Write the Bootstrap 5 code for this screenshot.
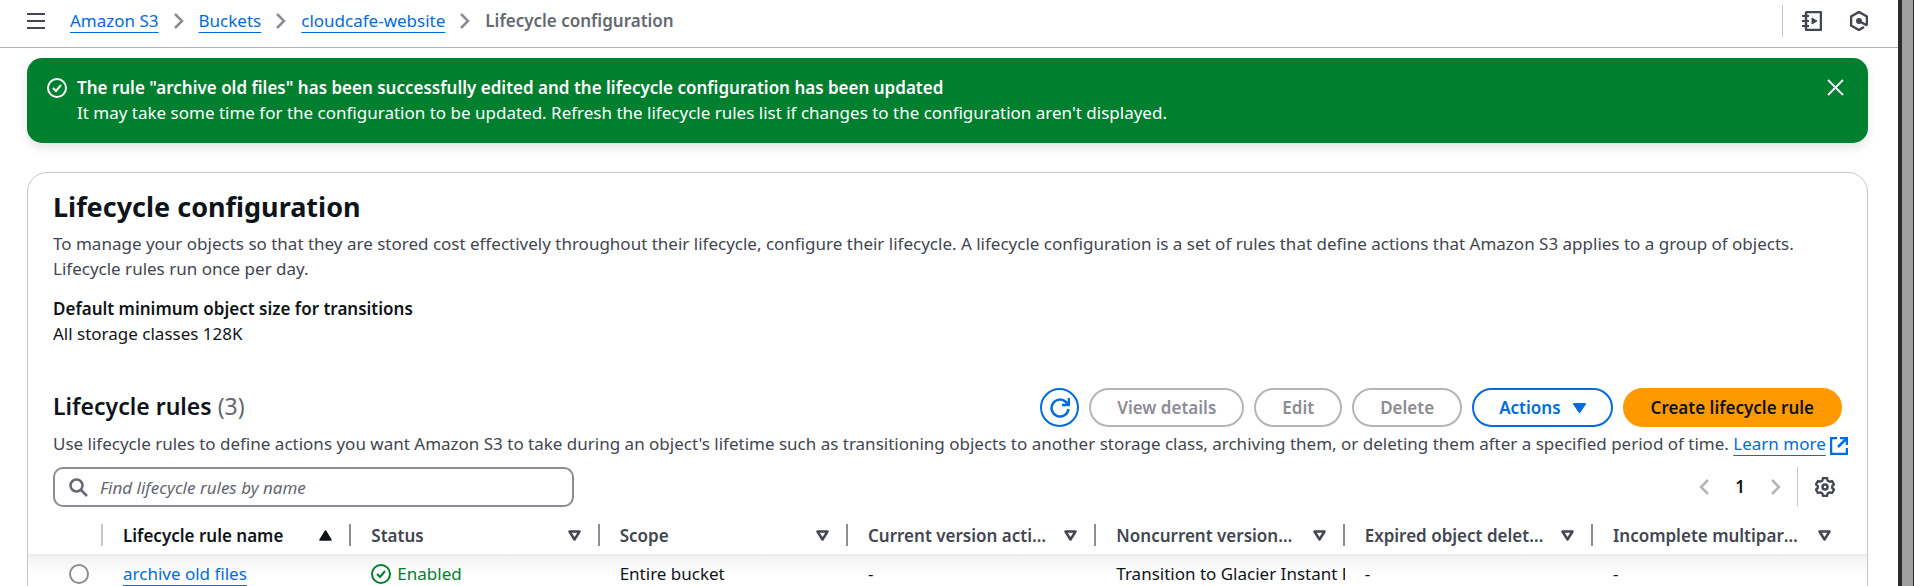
<!DOCTYPE html>
<html lang="en">
<head>
<meta charset="utf-8">
<meta name="viewport" content="width=device-width, initial-scale=1">
<title>Lifecycle configuration</title>
<link href="https://cdn.jsdelivr.net/npm/bootstrap@5.3.0/dist/css/bootstrap.min.css" rel="stylesheet">
<style>
  body { font: 400 17px/25px "Noto Sans", sans-serif; color: #0f141a; }
  a { color: #006ce0; text-decoration: underline; text-underline-offset: 5px; text-decoration-thickness: 1px; }
  svg { display: block; flex: none; fill: none; stroke: currentColor; stroke-width: 2; }
  svg.thick { stroke-width: 3; }
  .semi { font-weight: 600; }
  .ink-2 { color: #424650; }
  .ink-3 { color: #656871; }
  .icon-btn { background: none; border: 0; padding: 0; color: #424650; display: flex; }
  .topbar { height: 48px; padding: 0 30px 6px 27px; border-bottom: 1px solid #b4b4b4; }
  .topbar-tools { gap: 28px; padding-left: 19px; height: 32px; border-left: 1px solid #c6c6cd; }
  .crumbs { gap: 15px; margin-left: 25px; }
  .crumbs svg { color: #8c8c94; }
  .content { padding: 10px 30px 0 27px; }
  .flash { background: #00802f; color: #fff; border-radius: 15px; padding: 17px 24px 18px 20px; gap: 10px; box-shadow: 0 5px 10px rgba(0, 7, 22, .1); }
  .flash .icon-btn { color: #ebebf0; }
  .flash-icon { margin-top: 3px; }
  .panel { margin-top: 29px; border: 1px solid #c6c6cd; border-radius: 20px; min-height: 500px; }
  .panel-pad { padding: 15px 25px 0; }
  h1 { font-size: 27px; line-height: 37px; font-weight: 700; margin: 0 0 6px; }
  h2 { font-size: 23px; line-height: 30px; font-weight: 600; margin: 0; padding-bottom: 4px; }
  h2 span { font-weight: 400; color: #656871; }
  .intro { margin-bottom: 15px; }
  .rules-head { margin-top: 42px; }
  .rules-intro { margin: 4px -14px 11px 0; }
  .rules-intro a { white-space: nowrap; }
  .pill { height: 39px; border: 2px solid #006ce0; border-radius: 20px; padding: 0 26px; background: #fff; color: #006ce0; font-weight: 600; line-height: 25px; white-space: nowrap; }
  .pill:disabled { border-color: #b4b4bb; color: #8c8c94; }
  .pill-primary { background: #ff9900; border-color: #ff9900; color: #0f141a; }
  .pill-round { width: 39px; padding: 0; }
  .pill-menu { gap: 12px; padding: 0 25px; }
  .search { width: 521px; height: 40px; border: 2px solid #8c8c94; border-radius: 10px; padding: 0 14px; gap: 12px; color: #656871; }
  .search input { border: 0; outline: 0; background: none; padding: 0; color: #0f141a; }
  .search input::placeholder { font-style: italic; color: #656871; opacity: 1; }
  .pager { height: 39px; }
  .pager .dim { color: #b4b4bb; }
  .page-no { padding: 0 26px; font-weight: 600; }
  .prefs { height: 39px; border-left: 1px solid #c6c6cd; margin-left: 16px; padding: 0 7px 0 17px; }
  .rules { table-layout: fixed; width: 100%; margin-top: 9px; }
  .rules .pick { width: 75px; }
  .rules .final { width: 274px; }
  .rules th { height: 38px; padding: 8px 0 8px; vertical-align: top; font-weight: 600; color: #424650; }
  .rules thead { border-bottom: 2px solid #ebebf0; }
  .cell-head { height: 22px; padding: 0 17px 0 20px; gap: 14px; border-right: 2px solid #8c8c94; }
  .pick .cell-head { border-right-color: #c6c6cd; }
  .final .cell-head { border-right: 0; padding-right: 36px; }
  .rules .sorted { color: #0f141a; }
  .rules td { height: 48px; padding: 5px 0 0 20px; vertical-align: top; white-space: nowrap; overflow: hidden; }
  .rules tbody tr { background: linear-gradient(#f3f3f4, #fff 22px); }
  .rules td.choice { padding: 8px 0 0 41px; }
  .rules td.choice input { display: block; appearance: none; width: 20px; height: 20px; margin: 0; border: 2px solid #8c8c94; border-radius: 50%; background: #fff; }
  .ok { color: #00802f; gap: 6px; }
  .edge { width: 16px; flex: none; background: #9f9f9f; border-left: 4px solid #2b2b2b; border-right: 1px solid #2b2b2b; }
</style>
</head>
<body>
<div class="d-flex vh-100 overflow-hidden">
  <div class="flex-grow-1 overflow-hidden">
    <header class="topbar d-flex align-items-center">
      <button class="icon-btn" type="button" aria-label="Open navigation"><svg width="18" height="18" viewBox="0 0 18 18"><path d="M0 2h18M0 9h18M0 16h18"/></svg></button>
      <nav class="crumbs d-flex align-items-center me-auto" aria-label="Breadcrumb">
        <a href="#">Amazon S3</a>
        <svg width="10" height="16" viewBox="0 0 10 16"><path d="m1 1 7 7-7 7" stroke-width="2.5"/></svg>
        <a href="#">Buckets</a>
        <svg width="10" height="16" viewBox="0 0 10 16"><path d="m1 1 7 7-7 7" stroke-width="2.5"/></svg>
        <a href="#">cloudcafe-website</a>
        <svg width="10" height="16" viewBox="0 0 10 16"><path d="m1 1 7 7-7 7" stroke-width="2.5"/></svg>
        <span class="semi ink-3">Lifecycle configuration</span>
      </nav>
      <div class="topbar-tools d-flex align-items-center">
        <button class="icon-btn" type="button" aria-label="Tutorials"><svg width="20" height="20" viewBox="0 0 20 20"><rect x="4" y="1" width="15" height="18" rx="1" stroke-width="2.5"/><path d="M0 5h7M0 10h7M0 15h7"/><path d="m10 7 5 3-5 3z" fill="currentColor" stroke-width="1"/></svg></button>
        <button class="icon-btn" type="button" aria-label="Diagnostics"><svg width="18" height="20" viewBox="0 0 18 20"><path d="M17 14.500v-9L9 1 1 5.500v9L9 19l5-3M9 10l8 4.500" stroke-width="2.500"/><circle cx="9" cy="10" r="2" fill="currentColor"/></svg></button>
      </div>
    </header>

    <main class="content">
      <div class="flash d-flex align-items-start" role="status">
        <svg class="flash-icon" width="20" height="20" viewBox="0 0 20 20"><circle cx="10" cy="10" r="9"/><path d="m6 10 3 3 5-6"/></svg>
        <div class="flex-grow-1">
          <div class="semi">The rule "archive old files" has been successfully edited and the lifecycle configuration has been updated</div>
          <div>It may take some time for the configuration to be updated. Refresh the lifecycle rules list if changes to the configuration aren't displayed.</div>
        </div>
        <button class="icon-btn mt-1" type="button" aria-label="Dismiss"><svg width="17" height="17" viewBox="0 0 17 17"><path d="m1 1 15 15M16 1 1 16"/></svg></button>
      </div>

      <section class="panel">
        <div class="panel-pad">
          <h1>Lifecycle configuration</h1>
          <p class="ink-2 intro">To manage your objects so that they are stored cost effectively throughout their lifecycle, configure their lifecycle. A lifecycle configuration is a set of rules that define actions that Amazon S3 applies to a group of objects. Lifecycle rules run once per day.</p>
          <div class="semi">Default minimum object size for transitions</div>
          <div>All storage classes 128K</div>

          <div class="rules-head d-flex align-items-center justify-content-between">
            <h2>Lifecycle rules <span>(3)</span></h2>
            <div class="d-flex" style="gap:10px">
              <button class="pill pill-round d-flex align-items-center justify-content-center" type="button" aria-label="Refresh"><svg width="20" height="20" viewBox="0 0 20 20"><path d="M18.500 11a8.500 8.500 0 1 1-2.500-7l2 2" stroke-width="2.500"/><path d="M19 0v7h-7" stroke-width="2.500"/></svg></button>
              <button class="pill" type="button" disabled>View details</button>
              <button class="pill" type="button" disabled>Edit</button>
              <button class="pill" type="button" disabled>Delete</button>
              <button class="pill pill-menu d-flex align-items-center" type="button">Actions<svg width="13" height="10" viewBox="0 0 13 10"><path d="M1 1h11L6.500 9z" fill="currentColor" stroke-linejoin="round"/></svg></button>
              <button class="pill pill-primary" type="button">Create lifecycle rule</button>
            </div>
          </div>
          <p class="ink-2 rules-intro">Use lifecycle rules to define actions you want Amazon S3 to take during an object's lifetime such as transitioning objects to another storage class, archiving them, or deleting them after a specified period of time. <a href="#">Learn more<svg class="d-inline-block align-text-bottom ms-1" width="18" height="18" viewBox="0 0 18 18"><path d="M7 1H1v16h16v-6M10 1h7v7M17 1 8 10" stroke-width="2.500"/></svg></a></p>

          <div class="d-flex justify-content-between">
            <label class="search d-flex align-items-center">
              <svg width="19" height="19" viewBox="0 0 19 19"><circle cx="7.500" cy="7.500" r="6" stroke-width="2.500"/><path d="m12 12 6 6" stroke-width="2.500"/></svg>
              <input class="flex-grow-1" type="search" placeholder="Find lifecycle rules by name" aria-label="Find lifecycle rules by name">
            </label>
            <div class="pager d-flex align-items-center">
              <button class="icon-btn dim" type="button" aria-label="Previous page"><svg width="10" height="16" viewBox="0 0 10 16"><path d="M9 1 2 8l7 7" stroke-width="2.500"/></svg></button>
              <span class="page-no">1</span>
              <button class="icon-btn dim" type="button" aria-label="Next page"><svg width="10" height="16" viewBox="0 0 10 16"><path d="m1 1 7 7-7 7" stroke-width="2.500"/></svg></button>
              <div class="prefs d-flex align-items-center">
                <button class="icon-btn" type="button" aria-label="Preferences"><svg width="20" height="20" viewBox="0 0 20 20" stroke-linejoin="round"><path d="M8 1h4l.600 2.600 2 1.100L17.100 4l2 3.400L17.200 9v2l1.900 1.600-2 3.400-2.500-.700-2 1.100L12 19H8l-.600-2.600-2-1.100-2.500.700-2-3.400L2.800 11V9L.900 7.400l2-3.400 2.500.700 2-1.100z" stroke-width="2.300"/><circle cx="10" cy="10" r="2.500" stroke-width="2.500"/></svg></button>
              </div>
            </div>
          </div>
        </div>

        <table class="rules">
          <thead>
            <tr>
              <th class="pick"><div class="cell-head"></div></th>
              <th class="sorted"><div class="cell-head d-flex align-items-center justify-content-between"><span class="text-truncate">Lifecycle rule name</span><svg width="13" height="11" viewBox="0 0 13 11"><path d="M1 10h11L6.500 1z" fill="currentColor" stroke-width="1.500" stroke-linejoin="round"/></svg></div></th>
              <th><div class="cell-head d-flex align-items-center justify-content-between"><span class="text-truncate">Status</span><svg width="13" height="11" viewBox="0 0 13 11"><path d="M1.500 1.500h10l-5 8z" stroke-width="2.500" stroke-linejoin="round"/></svg></div></th>
              <th><div class="cell-head d-flex align-items-center justify-content-between"><span class="text-truncate">Scope</span><svg width="13" height="11" viewBox="0 0 13 11"><path d="M1.500 1.500h10l-5 8z" stroke-width="2.500" stroke-linejoin="round"/></svg></div></th>
              <th><div class="cell-head d-flex align-items-center justify-content-between"><span class="text-truncate">Current version actions</span><svg width="13" height="11" viewBox="0 0 13 11"><path d="M1.500 1.500h10l-5 8z" stroke-width="2.500" stroke-linejoin="round"/></svg></div></th>
              <th><div class="cell-head d-flex align-items-center justify-content-between"><span class="text-truncate">Noncurrent versions actions</span><svg width="13" height="11" viewBox="0 0 13 11"><path d="M1.500 1.500h10l-5 8z" stroke-width="2.500" stroke-linejoin="round"/></svg></div></th>
              <th><div class="cell-head d-flex align-items-center justify-content-between"><span class="text-truncate">Expired object delete markers</span><svg width="13" height="11" viewBox="0 0 13 11"><path d="M1.500 1.500h10l-5 8z" stroke-width="2.500" stroke-linejoin="round"/></svg></div></th>
              <th class="final"><div class="cell-head d-flex align-items-center justify-content-between"><span class="text-truncate">Incomplete multipart uploads</span><svg width="13" height="11" viewBox="0 0 13 11"><path d="M1.500 1.500h10l-5 8z" stroke-width="2.500" stroke-linejoin="round"/></svg></div></th>
            </tr>
          </thead>
          <tbody>
            <tr>
              <td class="choice"><input type="radio" name="rule" aria-label="archive old files"></td>
              <td><a href="#">archive old files</a></td>
              <td><span class="ok d-flex align-items-center"><svg width="20" height="20" viewBox="0 0 20 20"><circle cx="10" cy="10" r="9"/><path d="m6 10 3 3 5-6"/></svg>Enabled</span></td>
              <td>Entire bucket</td>
              <td>-</td>
              <td>Transition to Glacier Instant Retrieval</td>
              <td>-</td>
              <td>-</td>
            </tr>
          </tbody>
        </table>
      </section>
    </main>
  </div>
  <div class="edge"></div>
</div>
<script src="https://cdn.jsdelivr.net/npm/bootstrap@5.3.0/dist/js/bootstrap.bundle.min.js"></script>
</body>
</html>
